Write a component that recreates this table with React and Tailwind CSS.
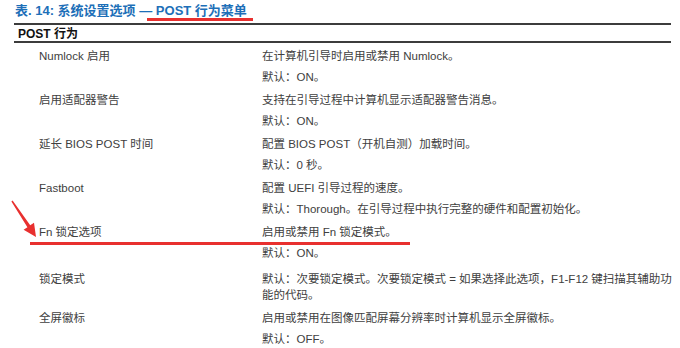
import React from "react";

const rows = [
  { label: "Numlock 启用", lines: ["在计算机引导时启用或禁用 Numlock。", "默认：ON。"] },
  { label: "启用适配器警告", lines: ["支持在引导过程中计算机显示适配器警告消息。", "默认：ON。"] },
  { label: "延长 BIOS POST 时间", lines: ["配置 BIOS POST（开机自测）加载时间。", "默认：0 秒。"] },
  { label: "Fastboot", lines: ["配置 UEFI 引导过程的速度。", "默认：Thorough。在引导过程中执行完整的硬件和配置初始化。"] },
  { label: "Fn 锁定选项", lines: ["启用或禁用 Fn 锁定模式。", "默认：ON。"] },
  {
    label: "锁定模式",
    lines: [
      <>
        默认：次要锁定模式。次要锁定模式 = 如果选择此选项，F1-F12 键扫描其辅助功
        <br />
        能的代码。
      </>,
    ],
    extra: true,
  },
  { label: "全屏徽标", lines: ["启用或禁用在图像匹配屏幕分辨率时计算机显示全屏徽标。", "默认：OFF。"] },
];

const App = () => {
  return (
    <div className="relative w-[680px] h-[348px] overflow-hidden bg-white font-['Liberation_Sans','Noto_Sans_CJK_SC',sans-serif] text-[#404040]">
      {/* Table caption */}
      <div className="pl-[15px] h-[21px] leading-[21px] text-[13px] font-bold text-[#1d6fb8]">
        表. 14: 系统设置选项 — POST 行为菜单
      </div>

      {/* Table */}
      <div className="mx-[14px] mt-[2px] w-[657px] border-t-2 border-[#3c3c3c]">
        <div className="pl-[4px] h-[18px] leading-[18px] text-[12px] font-bold text-[#111] border-b-2 border-[#3c3c3c]">
          POST 行为
        </div>

        <div className="pt-[5px] pl-[25px]">
          {rows.map((row) => (
            <div
              key={row.label}
              className={`grid grid-cols-[223px_1fr] pb-[7px] text-[11.5px] leading-[16px] ${row.extra ? "pt-[3px]" : ""}`}
            >
              <div>{row.label}</div>
              <div className="flex flex-col gap-[5px] whitespace-nowrap">
                {row.lines.map((line, i) => (
                  <p key={i}>{line}</p>
                ))}
              </div>
            </div>
          ))}
        </div>
      </div>

      {/* Annotations */}
      <div className="absolute left-[147px] top-[18px] w-[106px] h-[3px] bg-[#e8302f]" />
      <div className="absolute left-[30px] top-[242px] w-[380px] h-[3px] bg-[#e8302f]" />
      <svg className="absolute left-0 top-0 pointer-events-none" width="680" height="348" viewBox="0 0 680 348">
        <polygon
          points="12.6,200.6 30.2,225.2 34,222.7 36,237 23.6,229.7 27.4,227.2 11.4,201.4"
          fill="#e8302f"
        />
      </svg>
    </div>
  );
};

export default App;
